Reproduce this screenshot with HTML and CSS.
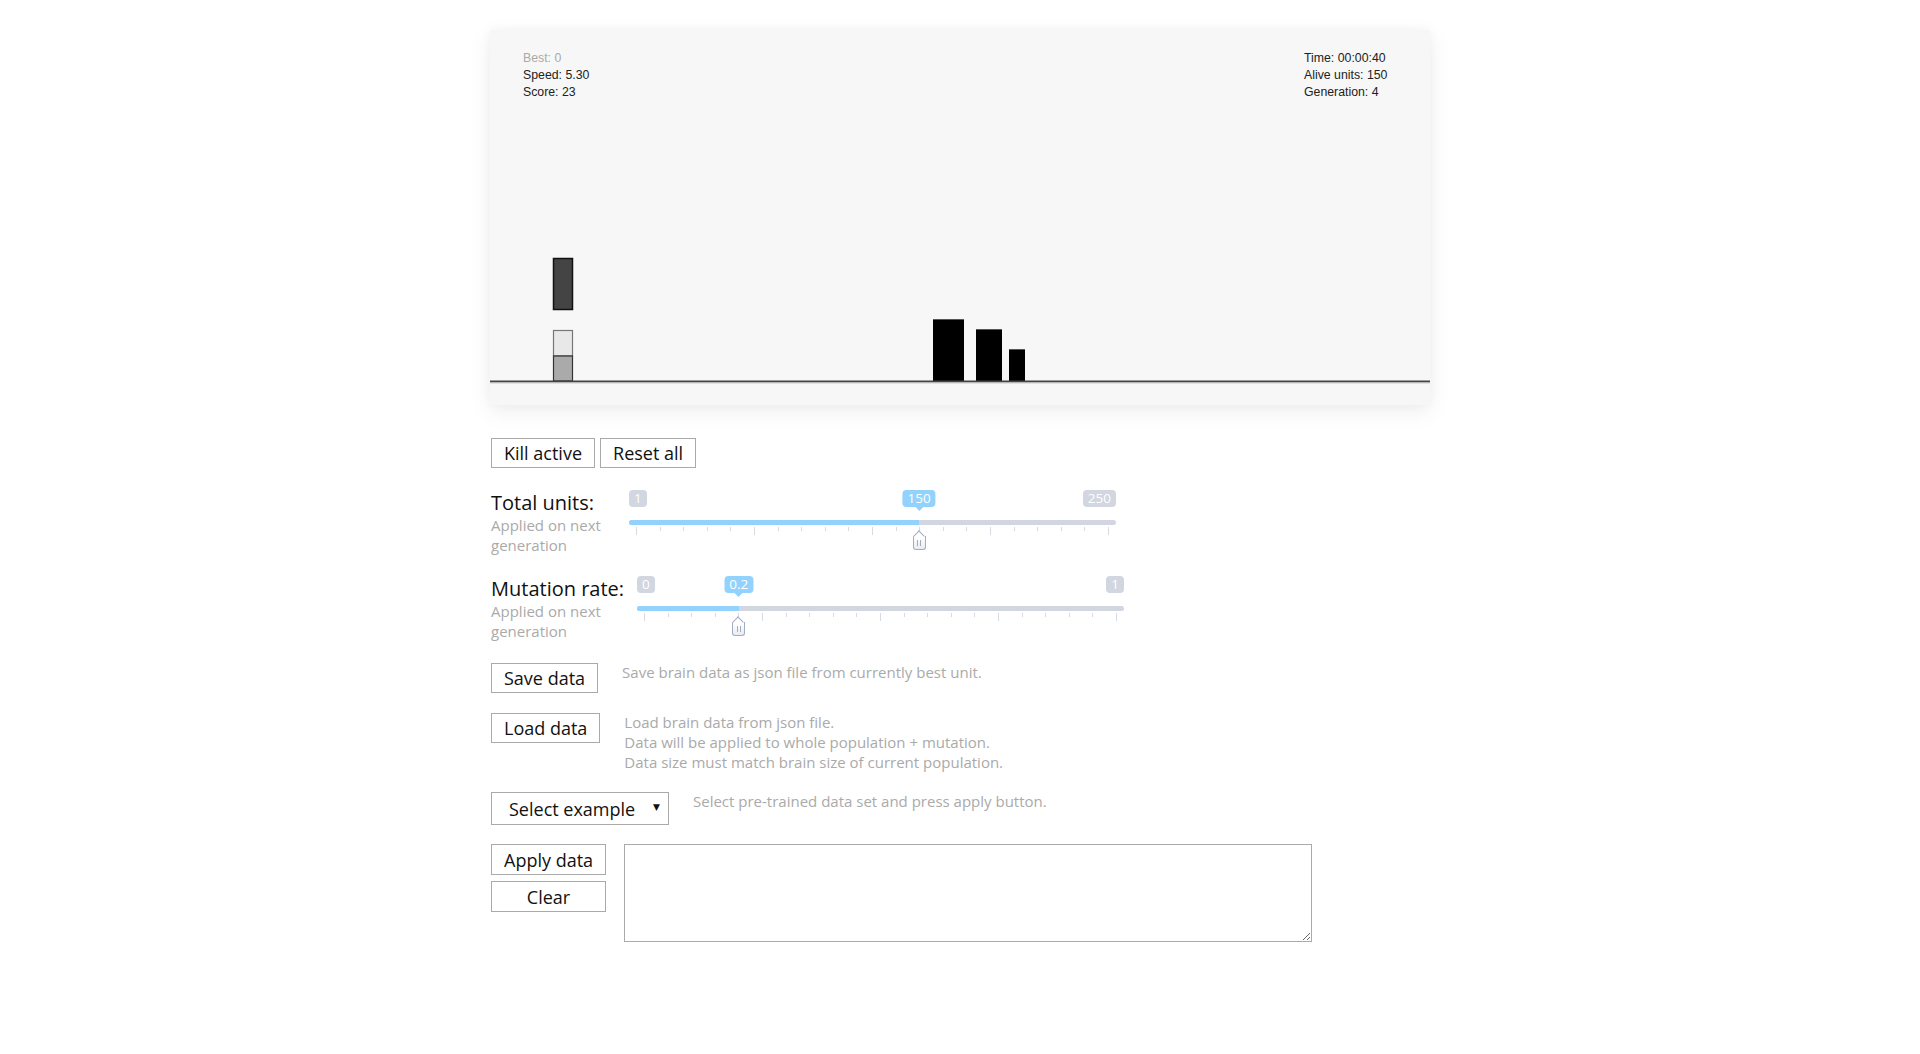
FILE: index.html
```html
<!DOCTYPE html>
<html lang="en">
<head>
<meta charset="utf-8">
<title>Neuro evolution</title>
<link rel="stylesheet" href="styles.css">
</head>
<body>
<div class="page">
  <div class="stage">
    <svg class="scene" width="940" height="375" viewBox="0 0 940 375">
      <rect x="63.5" y="228.5" width="19" height="51" fill="#444" stroke="#111" stroke-width="1.5"/>
      <rect x="63.5" y="300.5" width="19" height="25.5" fill="#e8e8e8" stroke="#777" stroke-width="1.2"/>
      <rect x="63.5" y="326" width="19" height="25" fill="#aaa" stroke="#333" stroke-width="1.2"/>
      <rect x="443" y="289" width="31" height="62" fill="#000"/>
      <line x1="443" y1="289.5" x2="474" y2="289.5" stroke="#555" stroke-width="1"/>
      <rect x="486" y="299" width="26" height="52" fill="#000"/>
      <line x1="486" y1="299.5" x2="512" y2="299.5" stroke="#555" stroke-width="1"/>
      <rect x="519" y="319" width="16" height="32" fill="#000"/>
      <line x1="519" y1="319.5" x2="535" y2="319.5" stroke="#555" stroke-width="1"/>
      <line x1="0" y1="351.5" x2="940" y2="351.5" stroke="#444" stroke-width="2"/>
      <line x1="0" y1="353" x2="940" y2="353" stroke="#ccc" stroke-width="1"/>
    </svg>
    <div class="hud hud-left">
      <div class="muted">Best: 0</div>
      <div>Speed: 5.30</div>
      <div>Score: 23</div>
    </div>
    <div class="hud hud-right">
      <div>Time: 00:00:40</div>
      <div>Alive units: 150</div>
      <div>Generation: 4</div>
    </div>
  </div>

  <div class="controls">
    <div class="button-row">
      <button class="btn">Kill active</button>
      <button class="btn">Reset all</button>
    </div>

    <div class="setting">
      <div class="setting-label">
        <div class="setting-title">Total units:</div>
        <div class="note">Applied on next generation</div>
      </div>
      <div class="slider" style="--p: 0.5984">
        <div class="scale">
          <span class="bubble min">1</span>
          <span class="bubble cur">150</span>
          <span class="bubble max">250</span>
        </div>
        <div class="track"><div class="fill"></div></div>
        <div class="ticks">
          <i class="major"></i><i></i><i></i><i></i><i></i>
          <i class="major"></i><i></i><i></i><i></i><i></i>
          <i class="major"></i><i></i><i></i><i></i><i></i>
          <i class="major"></i><i></i><i></i><i></i><i></i>
          <i class="major"></i>
        </div>
        <span class="handle"></span>
      </div>
    </div>

    <div class="setting">
      <div class="setting-label">
        <div class="setting-title">Mutation rate:</div>
        <div class="note">Applied on next generation</div>
      </div>
      <div class="slider" style="--p: 0.2">
        <div class="scale">
          <span class="bubble min">0</span>
          <span class="bubble cur">0.2</span>
          <span class="bubble max">1</span>
        </div>
        <div class="track"><div class="fill"></div></div>
        <div class="ticks">
          <i class="major"></i><i></i><i></i><i></i><i></i>
          <i class="major"></i><i></i><i></i><i></i><i></i>
          <i class="major"></i><i></i><i></i><i></i><i></i>
          <i class="major"></i><i></i><i></i><i></i><i></i>
          <i class="major"></i>
        </div>
        <span class="handle"></span>
      </div>
    </div>

    <div class="action first">
      <button class="btn">Save data</button>
      <div class="desc">Save brain data as json file from currently best unit.</div>
    </div>

    <div class="action">
      <button class="btn">Load data</button>
      <div class="desc">Load brain data from json file.<br>Data will be applied to whole population + mutation.<br>Data size must match brain size of current population.</div>
    </div>

    <div class="action">
      <span class="select-wrap">
        <select class="select">
          <option>Select example</option>
        </select>
      </span>
      <div class="desc">Select pre-trained data set and press apply button.</div>
    </div>

    <div class="apply-row">
      <div class="apply-buttons">
        <button class="btn tall">Apply data</button>
        <button class="btn tall">Clear</button>
      </div>
      <textarea class="data"></textarea>
    </div>
  </div>
</div>
</body>
</html>
```

FILE: styles.css
```css
html, body {
  margin: 0;
  padding: 0;
  background: #fff;
}

body {
  font-family: "Open Sans", "Noto Sans", sans-serif;
  color: #111;
}

.page {
  width: 940px;
  margin: 30px auto 0;
}

/* ---- game stage ---- */
.stage {
  position: relative;
  width: 940px;
  height: 375px;
  background: #f7f7f7;
  box-shadow: 0 6px 22px rgba(0, 0, 0, 0.07), 0 0 10px rgba(0, 0, 0, 0.03);
}

.scene {
  display: block;
}

.hud {
  position: absolute;
  top: 20px;
  font-family: "Liberation Sans", Arial, sans-serif;
  font-size: 12.3px;
  line-height: 17.2px;
  color: #222;
}

.hud-left {
  left: 33px;
}

.hud-right {
  left: 814px;
}

.muted {
  color: #aaa;
}

/* ---- controls ---- */
.controls {
  padding-left: 1px;
  padding-top: 33px;
}

.btn {
  box-sizing: border-box;
  height: 30px;
  padding: 0 12px;
  margin: 0;
  background: #fff;
  border: 1px solid #aaa;
  border-radius: 0;
  font-family: "Open Sans", "Noto Sans", sans-serif;
  font-size: 18px;
  line-height: 26px;
  color: #111;
}

.btn.tall {
  height: 31px;
}

.button-row {
  display: flex;
  gap: 5px;
}

.setting {
  display: flex;
  align-items: flex-start;
  margin-top: 21px;
}

.setting + .setting {
  margin-top: 20px;
}

.setting-label {
  flex: none;
  min-width: 125px;
}

.setting-title {
  font-size: 20px;
  line-height: 27px;
  white-space: nowrap;
  color: #111;
}

.note {
  max-width: 125px;
  font-size: 15px;
  line-height: 19.6px;
  color: #aaa;
}

/* ---- range slider ---- */
.slider {
  position: relative;
  flex: none;
  width: 487px;
  height: 62px;
  margin-left: 13px;
}

.scale {
  position: relative;
  height: 17px;
}

.bubble {
  position: absolute;
  top: 1px;
  padding: 0 5px;
  font-size: 13.5px;
  line-height: 17px;
  color: #fff;
  background: #d1d6e0;
  border-radius: 4px;
  white-space: nowrap;
}

.bubble.min {
  left: 0;
}

.bubble.max {
  right: 0;
}

.bubble.cur {
  left: calc(7px + var(--p) * 473px);
  transform: translateX(-50%);
  background: #92d2fc;
}

.bubble.cur::after {
  content: "";
  position: absolute;
  left: 50%;
  bottom: -4px;
  margin-left: -4px;
  border-left: 4px solid transparent;
  border-right: 4px solid transparent;
  border-top: 4px solid #92d2fc;
}

.track {
  position: relative;
  height: 5px;
  margin-top: 14px;
  border-radius: 3px;
  background: #d1d6e0;
  overflow: hidden;
}

.fill {
  width: calc(7px + var(--p) * 473px);
  height: 100%;
  background: #92d2fc;
}

.ticks {
  display: flex;
  justify-content: space-between;
  align-items: flex-start;
  height: 8px;
  margin: 2px 7px 0;
}

.ticks i {
  display: block;
  width: 1px;
  height: 4px;
  background: #d6dae2;
}

.ticks i.major {
  height: 8px;
}

.handle {
  position: absolute;
  top: 47px;
  left: calc(7px + var(--p) * 473px);
  box-sizing: border-box;
  width: 13px;
  height: 14px;
  margin-left: -6.5px;
  background: linear-gradient(#fff, #e9ecf0);
  border: 1px solid #a3adc1;
  border-top: 0;
  border-radius: 0 0 3px 3px;
}

.handle::before {
  content: "";
  position: absolute;
  top: -4px;
  left: 1px;
  box-sizing: border-box;
  width: 8px;
  height: 8px;
  background: #fff;
  border-left: 1px solid #a3adc1;
  border-top: 1px solid #a3adc1;
  transform: rotate(45deg);
}

.handle::after {
  content: "";
  position: absolute;
  top: 4px;
  left: 3.5px;
  box-sizing: border-box;
  width: 4px;
  height: 6px;
  border-left: 1px solid #a3adc1;
  border-right: 1px solid #a3adc1;
}

/* ---- data actions ---- */
.action {
  display: flex;
  align-items: flex-start;
  gap: 24px;
  margin-top: 20px;
}

.action.first {
  margin-top: 22px;
}

.desc {
  font-size: 15px;
  line-height: 19.6px;
  color: #aaa;
}

.select-wrap {
  position: relative;
  display: block;
  flex: none;
}

.select {
  display: block;
  box-sizing: border-box;
  width: 178px;
  height: 33px;
  margin: 0;
  padding: 0 0 0 17px;
  appearance: none;
  -webkit-appearance: none;
  background: #fff;
  border: 1px solid #aaa;
  border-radius: 0;
  font-family: "Open Sans", "Noto Sans", sans-serif;
  font-size: 18px;
  color: #111;
}

.select-wrap::after {
  content: "\25BC";
  position: absolute;
  right: 9px;
  top: 9px;
  font-family: "DejaVu Sans", sans-serif;
  font-size: 9px;
  line-height: 12px;
  color: #111;
  pointer-events: none;
}

.apply-row {
  display: flex;
  align-items: flex-start;
  gap: 18px;
  margin-top: 19px;
}

.apply-buttons {
  display: flex;
  flex-direction: column;
  gap: 6px;
}

.data {
  box-sizing: border-box;
  width: 688px;
  height: 98px;
  margin: 0;
  border: 1px solid #aaa;
  border-radius: 0;
  background: #fff;
}
```
